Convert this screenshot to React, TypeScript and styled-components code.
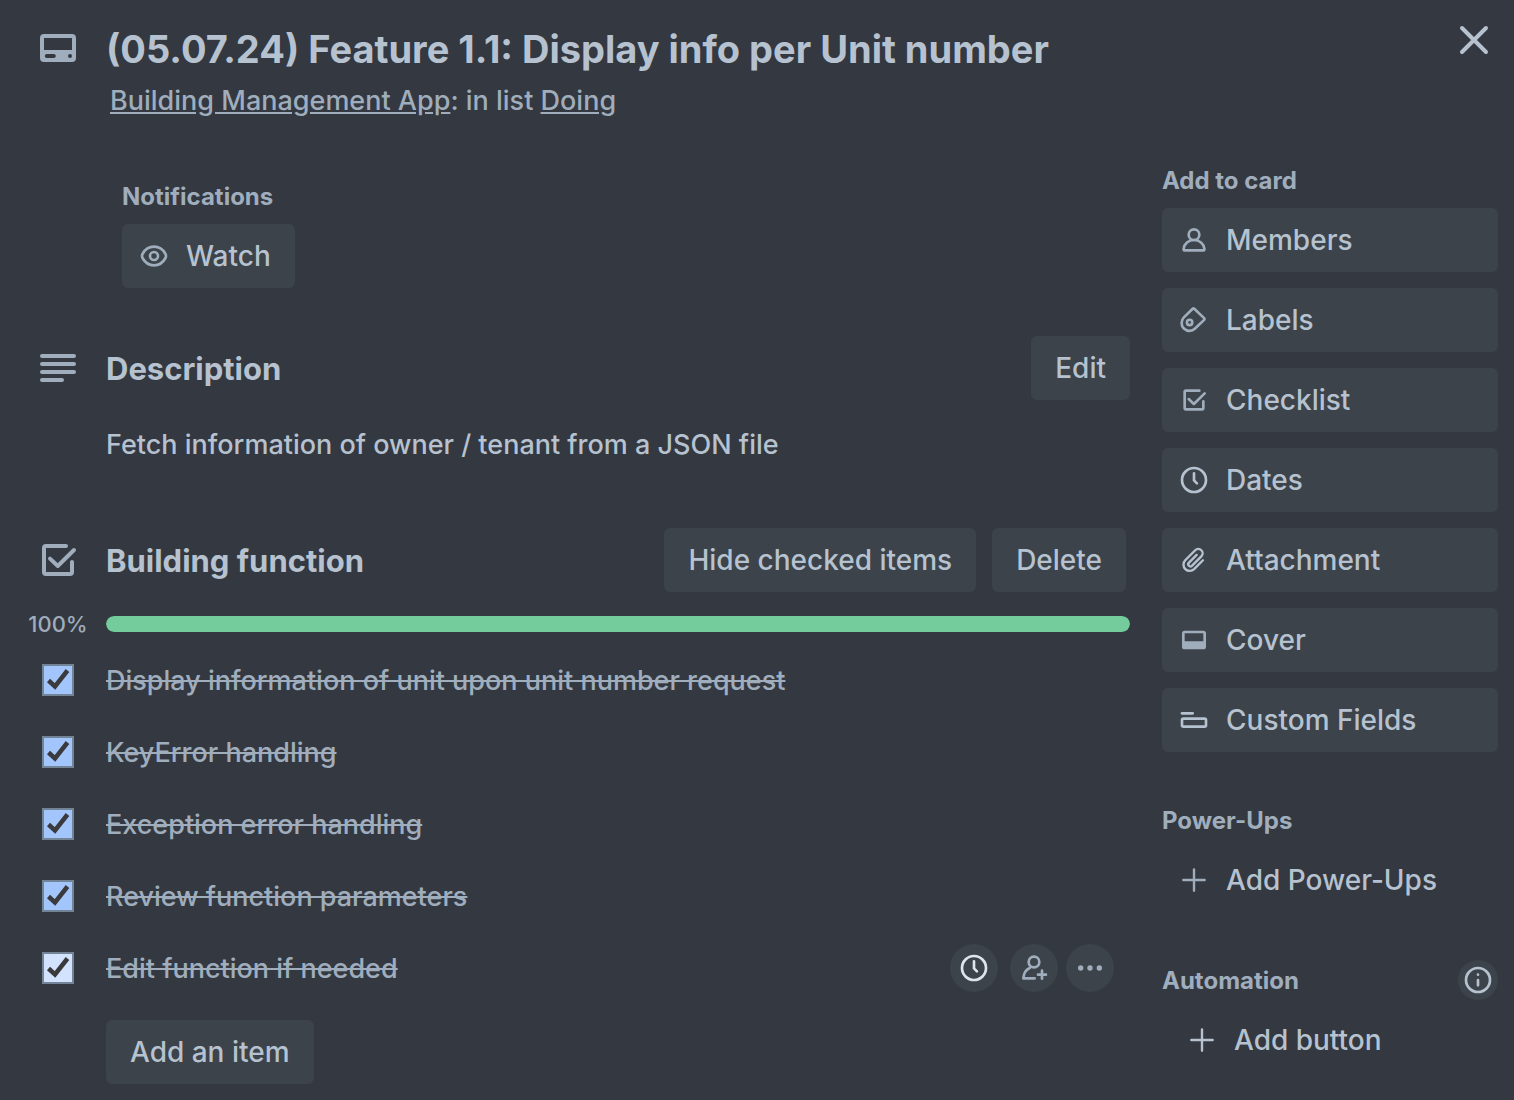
import React, { useState } from "react";
import styled, { createGlobalStyle } from "styled-components";

const color = {
  surface: "#343840",
  control: "#3c434a",
  controlHover: "#465059",
  text: "#b6c2cf",
  subtle: "#9fadbc",
  bright: "#dee4ea",
  success: "#74cb9b",
  check: "#a2c6fc",
  checkHover: "#d3e3fd",
  border: "#738496",
};

const GlobalStyle = createGlobalStyle`
  *, *::before, *::after { box-sizing: border-box; }
  body {
    margin: 0;
    background: ${color.surface};
    color: ${color.text};
    font-family: Inter, "Liberation Sans", sans-serif;
    font-size: 27px;
    font-weight: 450;
  }
  h1, h2, h3, p, ul { margin: 0; padding: 0; }
  button { font: inherit; color: inherit; cursor: pointer; }
`;

const Dialog = styled.main`
  min-height: 100vh;
  padding: 24px 16px 16px 26px;
  background: ${color.surface};
`;

const Gutter = styled.div`
  display: grid;
  place-items: center;
  width: 64px;
  flex: none;
  color: ${color.subtle};
`;

const Header = styled.header`
  display: flex;
  align-items: flex-start;
  gap: 16px;
`;

const HeaderText = styled.div`
  flex: 1;
  min-width: 0;
`;

const Title = styled.h1`
  font-size: 38px;
  line-height: 50px;
  font-weight: 650;
`;

const Location = styled.p`
  height: 42px;
  padding: 10px 4px 0;
  line-height: 34px;
  color: ${color.subtle};
`;

const Link = styled.a`
  color: inherit;
  text-decoration: underline;
`;

const CloseButton = styled.button`
  display: grid;
  place-items: center;
  width: 48px;
  height: 32px;
  flex: none;
  padding: 0;
  border: 0;
  background: none;
`;

const Body = styled.div`
  display: grid;
  grid-template-columns: minmax(0, 1fr) 336px;
  gap: 32px;
  padding-top: 52px;
`;

const Content = styled.div`
  padding-top: 16px;
`;

const Indent = styled.div<{ $extra?: number }>`
  padding-left: ${(p) => 80 + (p.$extra ?? 0)}px;
`;

const SmallHeading = styled.h3`
  height: 24px;
  font-size: 24px;
  line-height: 26px;
  font-weight: 650;
  color: ${color.subtle};
`;

const Button = styled.button<{ $plain?: boolean; $block?: boolean; $inset?: boolean }>`
  display: flex;
  align-items: center;
  gap: 16px;
  width: ${(p) => (p.$block ? "100%" : "auto")};
  height: 64px;
  padding: 0 24px 0 ${(p) => (p.$inset ? 24 : 16)}px;
  border: 0;
  border-radius: 6px;
  background: ${(p) => (p.$plain ? "transparent" : color.control)};
  font-size: 28px;
  line-height: 40px;
  font-weight: 500;
  white-space: nowrap;
  &:hover { background: ${color.controlHover}; }
`;

const ButtonIcon = styled.span<{ $subtle?: boolean }>`
  display: grid;
  flex: none;
  color: ${(p) => (p.$subtle ? color.subtle : color.text)};
`;

const Notifications = styled.section`
  display: flex;
  flex-direction: column;
  align-items: flex-start;
  gap: 16px;
`;

const Section = styled.section<{ $gap: number }>`
  padding-top: ${(p) => p.$gap}px;
`;

const SectionHeader = styled.div<{ $end?: number }>`
  display: flex;
  align-items: center;
  gap: 16px;
  height: 64px;
  padding-right: ${(p) => p.$end ?? 0}px;
`;

const SectionTitle = styled.h2`
  flex: 1;
  height: 40px;
  font-size: 31px;
  line-height: 42px;
  font-weight: 650;
`;

const Description = styled.p`
  padding-top: 24px;
  margin-bottom: -2px;
  line-height: 42px;
`;

const ProgressRow = styled.div`
  display: flex;
  align-items: center;
  gap: 16px;
  padding: 20px 0 8px;
`;

const Percent = styled.span`
  font-size: 22px;
  line-height: 24px;
`;

const Track = styled.div`
  flex: 1;
  height: 16px;
  border-radius: 8px;
  background: ${color.control};
  overflow: hidden;
`;

const Fill = styled.div`
  height: 100%;
  border-radius: 8px;
  background: ${color.success};
`;

const Items = styled.ul`
  list-style: none;
`;

const Item = styled.li`
  display: flex;
  align-items: center;
  gap: 16px;
  height: 72px;
  padding-right: 16px;
`;

const CheckWrap = styled.span`
  display: grid;
  width: 32px;
  height: 32px;
  & > * { grid-area: 1 / 1; }
  & > svg { pointer-events: none; }
`;

const Checkbox = styled.input<{ $active?: boolean }>`
  appearance: none;
  width: 32px;
  height: 32px;
  margin: 0;
  border: 2px solid ${color.border};
  background: transparent;
  cursor: pointer;
  &:checked { background: ${(p) => (p.$active ? color.checkHover : color.check)}; }
`;

const ItemLabel = styled.label<{ $done: boolean }>`
  flex: 1;
  height: 40px;
  line-height: 42px;
  color: ${(p) => (p.$done ? color.subtle : color.text)};
`;

const Struck = styled.s<{ $done: boolean }>`
  text-decoration: ${(p) => (p.$done ? "line-through" : "none")};
`;

const ItemActions = styled.div`
  display: flex;
  gap: 8px;
`;

const RoundButton = styled.button<{ $size: number; $bright?: boolean; $apart?: boolean }>`
  display: grid;
  place-items: center;
  width: ${(p) => p.$size}px;
  height: ${(p) => p.$size}px;
  margin-right: ${(p) => (p.$apart ? 4 : 0)}px;
  padding: 0;
  border: 0;
  border-radius: 50%;
  background: ${color.control};
  color: ${(p) => (p.$bright ? color.bright : color.subtle)};
`;

const InfoButton = styled(RoundButton)`
  color: ${color.text};
`;

const AddItem = styled(Indent)`
  padding-top: 16px;
`;

const Sidebar = styled.aside`
  display: flex;
  flex-direction: column;
`;

const SideGroup = styled.section<{ $before?: number; $gap?: number }>`
  display: flex;
  flex-direction: column;
  gap: ${(p) => p.$gap ?? 16}px;
  padding-top: ${(p) => p.$before ?? 0}px;
`;

const SideHeader = styled.div`
  display: flex;
  align-items: center;
  justify-content: space-between;
  height: 40px;
`;

type IconProps = { size?: number; width?: number; children: React.ReactNode };

const Icon = ({ size = 32, width = 2, children }: IconProps) => (
  <svg
    width={size}
    height={size}
    viewBox="0 0 24 24"
    fill="none"
    stroke="currentColor"
    strokeWidth={width}
    strokeLinecap="round"
    strokeLinejoin="round"
    aria-hidden="true"
  >
    {children}
  </svg>
);

const CardIcon = () => (
  <Icon size={48}>
    <path
      fill="currentColor"
      stroke="none"
      fillRule="evenodd"
      d="M5 5h14a2 2 0 0 1 2 2v10a2 2 0 0 1-2 2H5a2 2 0 0 1-2-2V7a2 2 0 0 1 2-2zM5 7v6h14V7zM6.400 15a1 1 0 0 0 0 2h3.500a1 1 0 0 0 0-2zM18 15a1 1 0 1 0 0 2 1 1 0 0 0 0-2z"
    />
  </Icon>
);

const TextIcon = () => (
  <Icon size={48}>
    <path d="M4 6h16M4 10h16M4 14h16M4 18h10" />
  </Icon>
);

const ChecklistIcon = ({ size }: { size?: number }) => (
  <Icon size={size}>
    <path d="M16 5H6a1 1 0 0 0-1 1v12a1 1 0 0 0 1 1h12a1 1 0 0 0 1-1v-5" />
    <path d="M8 11.300L11.900 15 20 7" />
  </Icon>
);

const CloseIcon = () => (
  <Icon width={3}>
    <path d="M3 3l18 18M21 3L3 21" />
  </Icon>
);

const EyeIcon = () => (
  <Icon>
    <path d="M12 5C7.300 5 4.600 8.300 3.500 10.300a3.400 3.400 0 0 0 0 3.400C4.600 15.700 7.300 19 12 19s7.400-3.300 8.500-5.300a3.400 3.400 0 0 0 0-3.400C19.400 8.300 16.700 5 12 5z" />
    <circle cx="12" cy="12" r="3" />
  </Icon>
);

const MemberIcon = () => (
  <Icon>
    <circle cx="12" cy="8" r="4" />
    <path d="M4.200 18.600C4.600 14.800 7.900 12 12 12s7.400 2.800 7.800 6.600c.1.800-.3 1.200-1 1.200H5.200c-.7 0-1.100-.4-1-1.200z" />
  </Icon>
);

const LabelIcon = () => (
  <Icon>
    <path d="M11 3.600a.9.9 0 0 1 1.200 0l7.400 7a.9.9 0 0 1 0 1.300l-6.800 6.500A5.940 5.940 0 0 1 4.400 10z" />
    <circle cx="8.700" cy="13.800" r="2" />
  </Icon>
);

const ClockIcon = () => (
  <Icon>
    <circle cx="12" cy="12" r="9" />
    <path d="M12 7v5.300l2.200 2.200" />
  </Icon>
);

const AttachmentIcon = () => (
  <Icon width={1.8}>
    <path d="M18.700 12.200l-6.600 6.700a4.740 4.740 0 0 1-6.700-6.700l7.500-7.500a3.250 3.250 0 0 1 4.600 4.600l-7.100 7.100a1.630 1.630 0 0 1-2.300-2.300L14 8.200" />
  </Icon>
);

const CoverIcon = () => (
  <Icon>
    <path
      fill="currentColor"
      stroke="none"
      fillRule="evenodd"
      d="M5 5h14a2 2 0 0 1 2 2v10a2 2 0 0 1-2 2H5a2 2 0 0 1-2-2V7a2 2 0 0 1 2-2zM5 7v6h14V7z"
    />
  </Icon>
);

const FieldsIcon = () => (
  <Icon>
    <path d="M3 7h8" />
    <rect x="3" y="11" width="18" height="6" rx="1" />
  </Icon>
);

const PlusIcon = () => (
  <Icon width={1.8}>
    <path d="M12 4v16M4 12h16" />
  </Icon>
);

const InfoIcon = () => (
  <Icon>
    <circle cx="12" cy="12" r="9" />
    <path d="M12 12v4M12 8v.010" />
  </Icon>
);

const AddMemberIcon = () => (
  <Icon>
    <circle cx="12" cy="7.500" r="4" />
    <path d="M8.800 12C6 13.200 4.300 15.800 4 19.800h8.500M18 14v6M15 17h6" />
  </Icon>
);

const MoreIcon = () => (
  <Icon>
    <g fill="currentColor" stroke="none">
      <circle cx="5" cy="12" r="2" />
      <circle cx="12" cy="12" r="2" />
      <circle cx="19" cy="12" r="2" />
    </g>
  </Icon>
);

const CheckMark = () => (
  <svg width="32" height="32" viewBox="0 0 32 32" fill="none" aria-hidden="true">
    <path d="M6.500 16.500l6.500 6L25.500 6.500" stroke="#3a3a3c" strokeWidth="4.500" />
  </svg>
);

const cardActions = [
  { name: "Members", icon: <MemberIcon />, subtle: true },
  { name: "Labels", icon: <LabelIcon />, subtle: true },
  { name: "Checklist", icon: <ChecklistIcon />, subtle: true },
  { name: "Dates", icon: <ClockIcon /> },
  { name: "Attachment", icon: <AttachmentIcon /> },
  { name: "Cover", icon: <CoverIcon />, subtle: true },
  { name: "Custom Fields", icon: <FieldsIcon /> },
];

const tasks = [
  "Display information of unit upon unit number request",
  "KeyError handling",
  "Exception error handling",
  "Review function parameters",
  "Edit function if needed",
];

export default function App() {
  const [done, setDone] = useState<boolean[]>(tasks.map(() => true));
  const percent = Math.round((done.filter(Boolean).length / tasks.length) * 100);
  const toggle = (index: number) => setDone(done.map((d, i) => (i === index ? !d : d)));

  return (
    <>
      <GlobalStyle />
      <Dialog>
        <Header>
          <Gutter>
            <CardIcon />
          </Gutter>
          <HeaderText>
            <Title>(05.07.24) Feature 1.1: Display info per Unit number</Title>
            <Location>
              <Link href="#board">Building Management App</Link>: in list <Link href="#list">Doing</Link>
            </Location>
          </HeaderText>
          <CloseButton aria-label="Close">
            <CloseIcon />
          </CloseButton>
        </Header>

        <Body>
          <Content>
            <Indent $extra={16}>
              <Notifications>
                <SmallHeading>Notifications</SmallHeading>
                <Button>
                  <ButtonIcon $subtle>
                    <EyeIcon />
                  </ButtonIcon>
                  Watch
                </Button>
              </Notifications>
            </Indent>

            <Section $gap={48}>
              <SectionHeader>
                <Gutter>
                  <TextIcon />
                </Gutter>
                <SectionTitle>Description</SectionTitle>
                <Button $inset>Edit</Button>
              </SectionHeader>
              <Indent>
                <Description>Fetch information of owner / tenant from a JSON file</Description>
              </Indent>
            </Section>

            <Section $gap={64}>
              <SectionHeader $end={4}>
                <Gutter>
                  <ChecklistIcon size={48} />
                </Gutter>
                <SectionTitle>Building function</SectionTitle>
                <Button $inset>Hide checked items</Button>
                <Button $inset>Delete</Button>
              </SectionHeader>
              <ProgressRow>
                <Gutter>
                  <Percent>{percent}%</Percent>
                </Gutter>
                <Track role="progressbar" aria-label="Building function" aria-valuenow={percent}>
                  <Fill style={{ width: `${percent}%` }} />
                </Track>
              </ProgressRow>
              <Items>
                {tasks.map((task, i) => {
                  const active = i === tasks.length - 1;
                  return (
                    <Item key={task}>
                      <Gutter>
                        <CheckWrap>
                          <Checkbox
                            type="checkbox"
                            id={`task-${i}`}
                            checked={done[i]}
                            onChange={() => toggle(i)}
                            $active={active}
                          />
                          {done[i] && <CheckMark />}
                        </CheckWrap>
                      </Gutter>
                      <ItemLabel htmlFor={`task-${i}`} $done={done[i]}>
                        <Struck $done={done[i]}>{task}</Struck>
                      </ItemLabel>
                      {active && (
                        <ItemActions>
                          <RoundButton $size={48} $bright $apart aria-label="Set due date">
                            <ClockIcon />
                          </RoundButton>
                          <RoundButton $size={48} aria-label="Assign">
                            <AddMemberIcon />
                          </RoundButton>
                          <RoundButton $size={48} aria-label="More actions">
                            <MoreIcon />
                          </RoundButton>
                        </ItemActions>
                      )}
                    </Item>
                  );
                })}
              </Items>
              <AddItem>
                <Button $inset>Add an item</Button>
              </AddItem>
            </Section>
          </Content>

          <Sidebar>
            <SideGroup>
              <SmallHeading>Add to card</SmallHeading>
              {cardActions.map((action) => (
                <Button key={action.name} $block>
                  <ButtonIcon $subtle={action.subtle}>{action.icon}</ButtonIcon>
                  {action.name}
                </Button>
              ))}
            </SideGroup>
            <SideGroup $before={56}>
              <SmallHeading>Power-Ups</SmallHeading>
              <Button $plain $block>
                <ButtonIcon $subtle>
                  <PlusIcon />
                </ButtonIcon>
                Add Power-Ups
              </Button>
            </SideGroup>
            <SideGroup $before={48} $gap={8}>
              <SideHeader>
                <SmallHeading>Automation</SmallHeading>
                <InfoButton $size={40} aria-label="About automation">
                  <InfoIcon />
                </InfoButton>
              </SideHeader>
              <Button $plain $block $inset>
                <ButtonIcon>
                  <PlusIcon />
                </ButtonIcon>
                Add button
              </Button>
            </SideGroup>
          </Sidebar>
        </Body>
      </Dialog>
    </>
  );
}
